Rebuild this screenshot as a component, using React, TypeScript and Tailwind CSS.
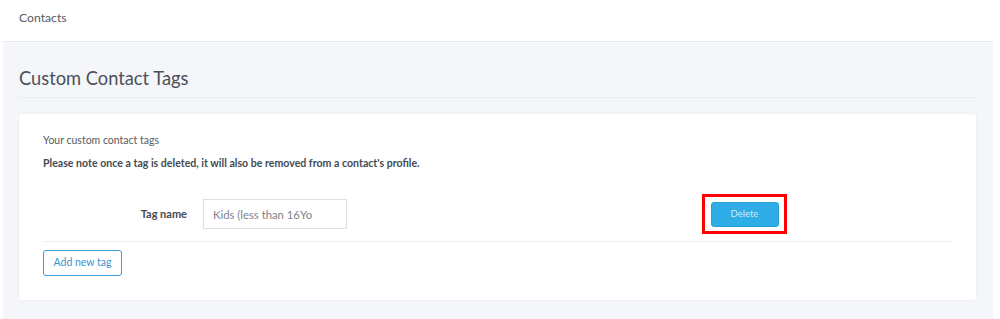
/**
 * Custom contact tags settings page.
 * Header bar, page title, and a card listing tags with delete + add actions.
 */

const font = { fontFamily: "Lato, 'Open Sans', sans-serif" };

const TagRow = ({ value }: { value: string }) => (
  <div className="flex items-center h-[40px]">
    <label className="w-[144px] text-right text-[11px] font-bold text-[#444b52]">
      Tag name
    </label>
    <input
      className="ml-[16px] w-[144px] h-[30px] border border-[#dcdfe3] px-[9px] text-[11.3px] text-[#666] placeholder:text-[#7d838a] outline-none"
      placeholder={value}
      style={font}
    />
    {/* highlighted delete action */}
    <div className="ml-[355px] w-[85px] h-[40px] border-[3px] border-[#ff0000] flex items-center justify-center">
      <button className="w-[68px] h-[25px] rounded-[3px] bg-[#2eade6] border border-[#27a1d8] text-[9.5px] text-[#cdeaf8]">
        Delete
      </button>
    </div>
  </div>
);

export default function App() {
  return (
    <div className="w-[1000px] h-[319px] bg-white overflow-hidden" style={font}>
      {/* Top bar */}
      <div className="h-[41px] px-[19px] pt-[4px]">
        <span className="text-[12.2px] leading-[20px] text-[#555b61]">Contacts</span>
      </div>

      <div className="ml-[3px] w-[990px] h-[278px] bg-[#f5f6fa] border-t border-[#e4e9ee] px-[16px]">
        <div className="pt-[22px] pb-[5px] border-b border-[#e9ebef] mr-[1px]">
          <h1 className="text-[18.3px] leading-[28px] font-normal text-[#4a5057]">
            Custom Contact Tags
          </h1>
        </div>

        <div className="mt-[16px] w-[957px] bg-white rounded-[3px] shadow-[0_0_3px_rgba(0,0,0,0.06)] px-[24px] pt-[17px] pb-[24px]">
          <p className="text-[10.5px] leading-[18px] text-[#555b61]">Your custom contact tags</p>
          <p className="mt-[5px] text-[10.6px] leading-[18px] font-bold text-[#444b52]">
            Please note once a tag is deleted, it will also be removed from a contact's profile.
          </p>

          <div className="mt-[22px] w-[910px]">
            <TagRow value="Kids (less than 16Yo" />
            <div className="mt-[7px] h-px bg-[#eceef1]" />
          </div>

          <button className="mt-[8px] w-[79px] h-[26px] rounded-[3px] border border-[#3a9bd6] text-[10.5px] text-[#3a94cf]">
            Add new tag
          </button>
        </div>
      </div>
    </div>
  );
}
